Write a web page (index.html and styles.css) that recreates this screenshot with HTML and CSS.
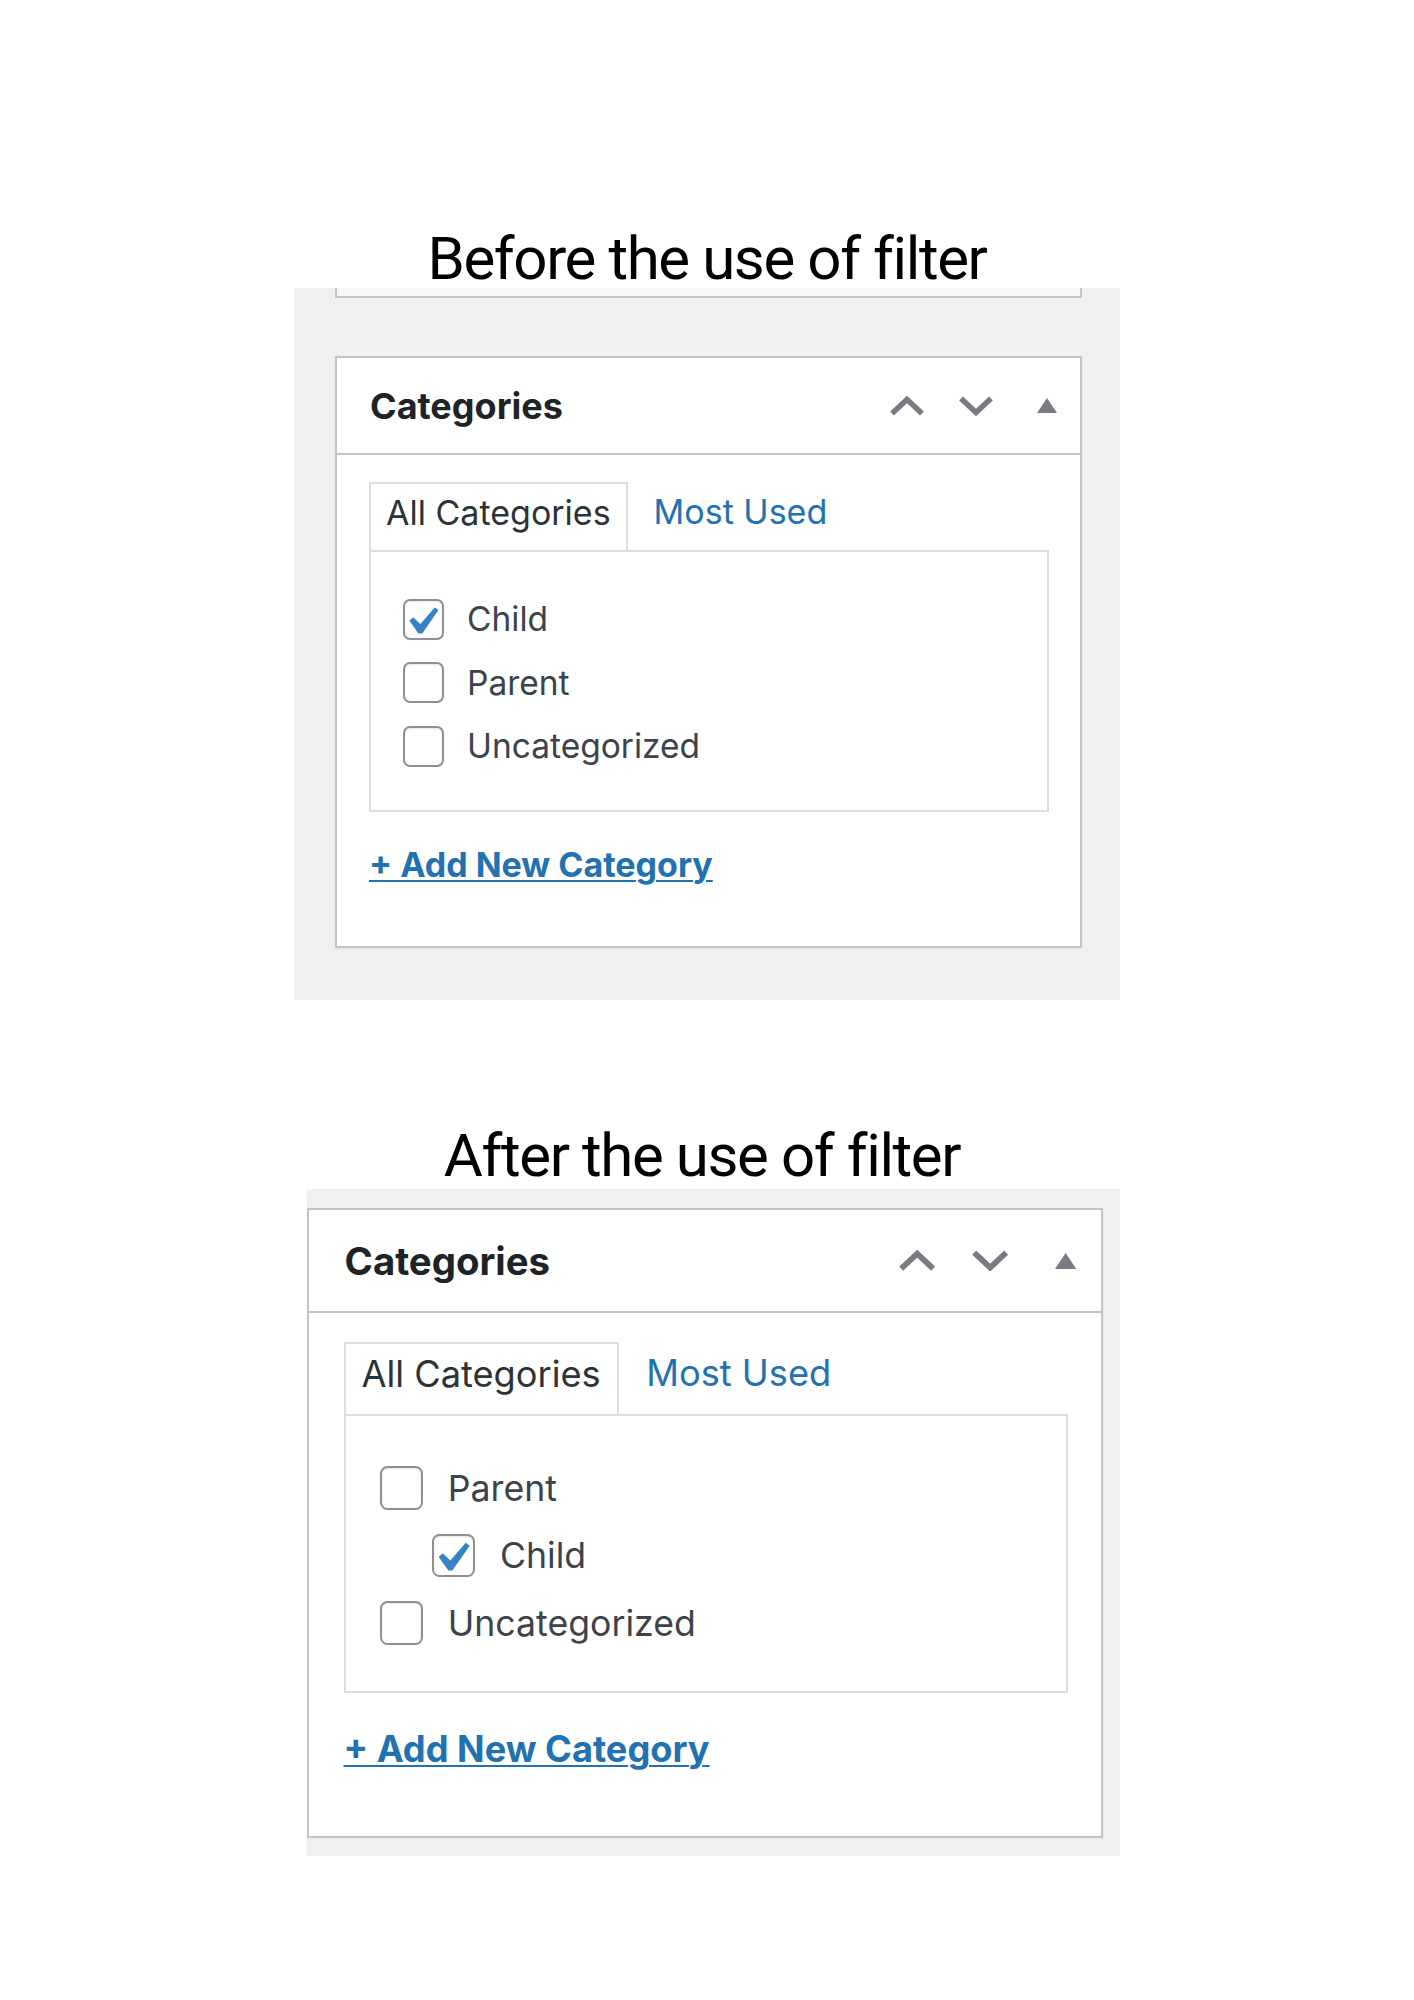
FILE: index.html
```html
<!DOCTYPE html>
<html lang="en">
<head>
<meta charset="utf-8">
<title>Categories filter: before and after</title>
<link rel="stylesheet" href="styles.css">
</head>
<body>
<main class="page">

  <section class="demo demo--before">
    <h2 class="demo-title">Before the use of filter</h2>
    <div class="canvas canvas--before">
      <div class="postbox-stub"></div>
      <div class="postbox">
        <div class="postbox-header">
          <h3 class="postbox-title">Categories</h3>
          <div class="handle-actions">
            <svg class="handle handle-up" width="36" height="20" viewBox="0 0 36 20" aria-hidden="true"><polyline points="3,17.5 18,3.5 33,17.5" fill="none" stroke="currentColor" stroke-width="5.5"/></svg>
            <svg class="handle handle-down" width="36" height="20" viewBox="0 0 36 20" aria-hidden="true"><polyline points="3,2.5 18,16.5 33,2.5" fill="none" stroke="currentColor" stroke-width="5.5"/></svg>
            <svg class="handle handle-toggle" width="20" height="15" viewBox="0 0 20 15" aria-hidden="true"><polygon points="10,0 20,15 0,15" fill="currentColor"/></svg>
          </div>
        </div>
        <div class="postbox-inside">
          <ul class="category-tabs">
            <li class="category-tab category-tab--active">All Categories</li>
            <li class="category-tab"><a href="#most-used">Most Used</a></li>
          </ul>
          <div class="tabs-panel">
            <ul class="categorychecklist">
              <li class="cat-item">
                <label class="selectit"><span class="checkbox is-checked"><svg viewBox="4.2 2.6 12.86 12.86" aria-hidden="true"><path d="M14.83 4.89l1.34.94-5.81 8.38H9.02L5.78 9.67l1.34-1.25 2.57 2.4z" fill="#3582c4"/></svg></span>Child</label>
              </li>
              <li class="cat-item">
                <label class="selectit"><span class="checkbox"></span>Parent</label>
              </li>
              <li class="cat-item">
                <label class="selectit"><span class="checkbox"></span>Uncategorized</label>
              </li>
            </ul>
          </div>
          <p class="add-new"><a href="#add-category">+ Add New Category</a></p>
        </div>
      </div>
    </div>
  </section>

  <section class="demo demo--after">
    <h2 class="demo-title">After the use of filter</h2>
    <div class="canvas canvas--after">
      <div class="postbox">
        <div class="postbox-header">
          <h3 class="postbox-title">Categories</h3>
          <div class="handle-actions">
            <svg class="handle handle-up" width="36" height="20" viewBox="0 0 36 20" aria-hidden="true"><polyline points="3,17.5 18,3.5 33,17.5" fill="none" stroke="currentColor" stroke-width="5.5"/></svg>
            <svg class="handle handle-down" width="36" height="20" viewBox="0 0 36 20" aria-hidden="true"><polyline points="3,2.5 18,16.5 33,2.5" fill="none" stroke="currentColor" stroke-width="5.5"/></svg>
            <svg class="handle handle-toggle" width="20" height="15" viewBox="0 0 20 15" aria-hidden="true"><polygon points="10,0 20,15 0,15" fill="currentColor"/></svg>
          </div>
        </div>
        <div class="postbox-inside">
          <ul class="category-tabs">
            <li class="category-tab category-tab--active">All Categories</li>
            <li class="category-tab"><a href="#most-used">Most Used</a></li>
          </ul>
          <div class="tabs-panel">
            <ul class="categorychecklist">
              <li class="cat-item">
                <label class="selectit"><span class="checkbox"></span>Parent</label>
                <ul class="children">
                  <li class="cat-item">
                    <label class="selectit"><span class="checkbox is-checked"><svg viewBox="4.2 2.6 12.86 12.86" aria-hidden="true"><path d="M14.83 4.89l1.34.94-5.81 8.38H9.02L5.78 9.67l1.34-1.25 2.57 2.4z" fill="#3582c4"/></svg></span>Child</label>
                  </li>
                </ul>
              </li>
              <li class="cat-item">
                <label class="selectit"><span class="checkbox"></span>Uncategorized</label>
              </li>
            </ul>
          </div>
          <p class="add-new"><a href="#add-category">+ Add New Category</a></p>
        </div>
      </div>
    </div>
  </section>

</main>
</body>
</html>
```

FILE: styles.css
```css
* {
  box-sizing: border-box;
}

html,
body {
  margin: 0;
  padding: 0;
  background: #ffffff;
}

body {
  font-family: Inter, "Noto Sans", "Liberation Sans", sans-serif;
  color: #3c434a;
}

.page {
  padding-top: 233.5px;
  padding-bottom: 120px;
}

/* ---------- captions ---------- */

.demo-title {
  margin: 0;
  font-family: Roboto, "Liberation Sans", sans-serif;
  font-weight: 400;
  font-size: 60px;
  line-height: 50px;
  letter-spacing: -1.4px;
  color: #000000;
  text-align: center;
}

.demo--before .demo-title {
  margin-bottom: 4.5px;
}

.demo--after {
  margin-top: 130.5px;
}

.demo--after .demo-title {
  margin-bottom: 8.5px;
  padding-right: 10px;
}

/* ---------- grey admin canvas ---------- */

.canvas {
  width: fit-content;
  margin-left: auto;
  margin-right: 294px;
  background: #f0f0f1;
}

.canvas--before {
  padding: 0 38px 52px 41px;
}

.canvas--after {
  padding: 19px 17px 18px 0;
}

.postbox-stub {
  height: 10px;
  background: #f6f7f7;
  border: 2px solid #c3c4c7;
  border-top: 0;
  margin-bottom: 58px;
}

/* ---------- meta box ---------- */

.postbox {
  width: 747px;
  background: #ffffff;
  border: 2px solid #c3c4c7;
  box-shadow: 0 1px 2px rgba(0, 0, 0, 0.08);
}

.canvas--after .postbox {
  zoom: 1.065;
}

.postbox-header {
  display: flex;
  align-items: center;
  height: 97px;
  padding: 0 23px 0 33px;
  border-bottom: 2px solid #c3c4c7;
}

.postbox-title {
  margin: 0;
  font-size: 36px;
  font-weight: 700;
  line-height: normal;
  color: #1d2327;
}

.handle-actions {
  display: flex;
  align-items: center;
  margin-left: auto;
  color: #787c82;
}

.handle {
  display: block;
  flex-shrink: 0;
}

.handle-down {
  margin-left: 33px;
}

.handle-toggle {
  margin-left: 43px;
}

.postbox-inside {
  padding: 27px 31px 61px 32px;
}

/* ---------- tabs ---------- */

.category-tabs {
  display: flex;
  height: 68px;
  margin: 0;
  padding: 0;
  list-style: none;
}

.category-tab {
  display: flex;
  align-items: center;
  padding: 0 15px 9px;
  font-size: 34px;
  line-height: normal;
  white-space: nowrap;
}

.category-tab + .category-tab {
  padding-left: 26px;
}

.category-tab--active {
  border: 2px solid #dcdcde;
  border-bottom: 0;
  color: #2c3338;
}

.category-tab a {
  color: #2271b1;
  text-decoration: none;
}

.tabs-panel {
  border: 2px solid #dcdcde;
  padding: 35.25px 20px 32.25px 32px;
}

/* ---------- checklist ---------- */

.categorychecklist,
.children {
  list-style: none;
  margin: 0;
  padding: 0;
}

.children {
  margin-left: 49px;
}

.selectit {
  display: flex;
  align-items: center;
  gap: 23px;
  height: 63.5px;
  font-size: 33.5px;
  line-height: normal;
  color: #3c434a;
}

.checkbox {
  flex-shrink: 0;
  width: 41px;
  height: 41px;
  border: 2.5px solid #8c8f94;
  border-radius: 7px;
  background: #ffffff;
  box-shadow: inset 0 1px 2px rgba(0, 0, 0, 0.1);
}

.checkbox svg {
  display: block;
  width: 36px;
  height: 36px;
}

/* ---------- add new link ---------- */

.add-new {
  margin: 32px 0 0;
  font-size: 34px;
  font-weight: 700;
  line-height: normal;
}

.add-new a {
  color: #2271b1;
  text-decoration: underline;
  text-decoration-thickness: 2px;
  text-underline-offset: 3px;
}
```
